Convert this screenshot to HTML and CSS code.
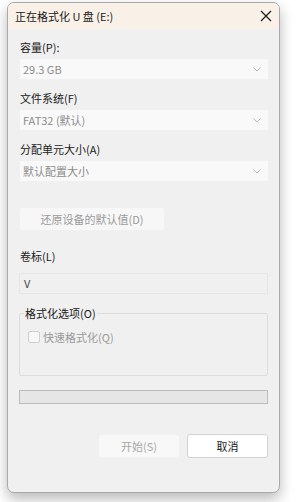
FILE: index.html
```html
<!DOCTYPE html>
<html lang="zh-CN">
<head>
    <meta charset="UTF-8">
    <title>正在格式化 U 盘 (E:)</title>
    <link rel="stylesheet" href="styles.css">
</head>
<body>
    <div class="dialog">
        <div class="titlebar">
            <span class="title">正在格式化 U 盘 (E:)</span>
            <svg class="close" width="12" height="12" viewBox="0 0 12 12">
                <path d="M1 1 L11 11 M11 1 L1 11" stroke="#1a1a1a" stroke-width="1.2" fill="none"/>
            </svg>
        </div>

        <div class="content">
            <label class="field-label">容量(P):</label>
            <div class="select">
                <span>29.3 GB</span>
                <svg class="chevron" width="8" height="5" viewBox="0 0 8 5"><path d="M0.5 0.5 L4 4 L7.5 0.5" stroke="#b8b8b8" fill="none"/></svg>
            </div>

            <label class="field-label">文件系统(F)</label>
            <div class="select">
                <span>FAT32 (默认)</span>
                <svg class="chevron" width="8" height="5" viewBox="0 0 8 5"><path d="M0.5 0.5 L4 4 L7.5 0.5" stroke="#b8b8b8" fill="none"/></svg>
            </div>

            <label class="field-label">分配单元大小(A)</label>
            <div class="select">
                <span>默认配置大小</span>
                <svg class="chevron" width="8" height="5" viewBox="0 0 8 5"><path d="M0.5 0.5 L4 4 L7.5 0.5" stroke="#b8b8b8" fill="none"/></svg>
            </div>

            <button class="btn btn-restore" disabled>还原设备的默认值(D)</button>

            <label class="field-label label-volume">卷标(L)</label>
            <div class="textbox">V</div>

            <fieldset class="group">
                <legend>格式化选项(O)</legend>
                <div class="check-row">
                    <span class="checkbox"></span>
                    <span>快速格式化(Q)</span>
                </div>
            </fieldset>

            <div class="progress"></div>

            <div class="actions">
                <button class="btn btn-start" disabled>开始(S)</button>
                <button class="btn btn-cancel">取消</button>
            </div>
        </div>
    </div>
</body>
</html>
```

FILE: styles.css
```css
* {
    margin: 0;
    padding: 0;
    box-sizing: border-box;
}

body {
    font-family: "Noto Sans CJK SC", "Noto Sans", sans-serif;
    font-size: 11px;
    color: #1f1f1f;
    background-color: #ffffff;
    padding: 2px 0 0 7px;
    height: 502px;
    overflow: hidden;
}

.dialog {
    width: 273px;
    height: 491px;
    background-color: #f0f0f0;
    border: 1px solid #a9a9a9;
    border-radius: 7px;
    box-shadow: 0 6px 14px rgba(0, 0, 0, 0.28);
    overflow: hidden;
}

.titlebar {
    height: 26px;
    background-color: #f9f1e7;
    display: flex;
    align-items: center;
    justify-content: space-between;
    padding: 0 7px 0 7px;
}

.title {
    font-size: 11px;
    color: #1a1a1a;
}

.content {
    padding: 11px 11px 0 12px;
    display: flex;
    flex-direction: column;
}

.field-label {
    display: block;
    height: 15px;
    line-height: 15px;
    color: #1a1a1a;
}

.select {
    height: 20px;
    margin-top: 4px;
    margin-bottom: 12px;
    background-color: #f9f9f9;
    display: flex;
    align-items: center;
    justify-content: space-between;
    padding: 0 7px 0 3px;
    color: #8c8c8c;
    font-size: 11px;
}

.btn {
    font-family: inherit;
    font-size: 11px;
    border: none;
    border-radius: 3px;
}

.btn-restore {
    width: 144px;
    height: 22px;
    margin-top: 15px;
    background-color: #f7f7f7;
    color: #9a9a9a;
}

.label-volume {
    margin-top: 19px;
}

.textbox {
    height: 21px;
    margin-top: 9px;
    margin-left: -1px;
    border: 1px solid #e6e6e6;
    border-radius: 2px;
    line-height: 19px;
    padding-left: 4px;
    color: #4a4a4a;
}

.group {
    margin-top: 12px;
    margin-left: -1px;
    height: 70px;
    border: 1px solid #dcdcdc;
    border-radius: 2px;
    padding: 9px 8px 0 8px;
}

.group legend {
    padding: 0 1px;
    margin-left: -4px;
    line-height: 14px;
    color: #1a1a1a;
}

.check-row {
    display: flex;
    align-items: center;
    gap: 3px;
    color: #9a9a9a;
}

.checkbox {
    width: 12px;
    height: 12px;
    border: 1px solid #cfcfcf;
    border-radius: 2px;
    background-color: #f7f7f7;
}

.progress {
    height: 14px;
    margin-top: 14px;
    margin-left: -1px;
    background-color: #e6e6e6;
    border: 1px solid #bcbcbc;
}

.actions {
    display: flex;
    justify-content: flex-end;
    gap: 8px;
    margin-top: 31px;
}

.btn-start {
    width: 80px;
    height: 22px;
    background-color: #f8f8f8;
    color: #a8a8a8;
}

.btn-cancel {
    width: 81px;
    height: 24px;
    margin-top: -1px;
    background-color: #ffffff;
    border: 1px solid #d3d3d3;
    color: #1a1a1a;
}
```
